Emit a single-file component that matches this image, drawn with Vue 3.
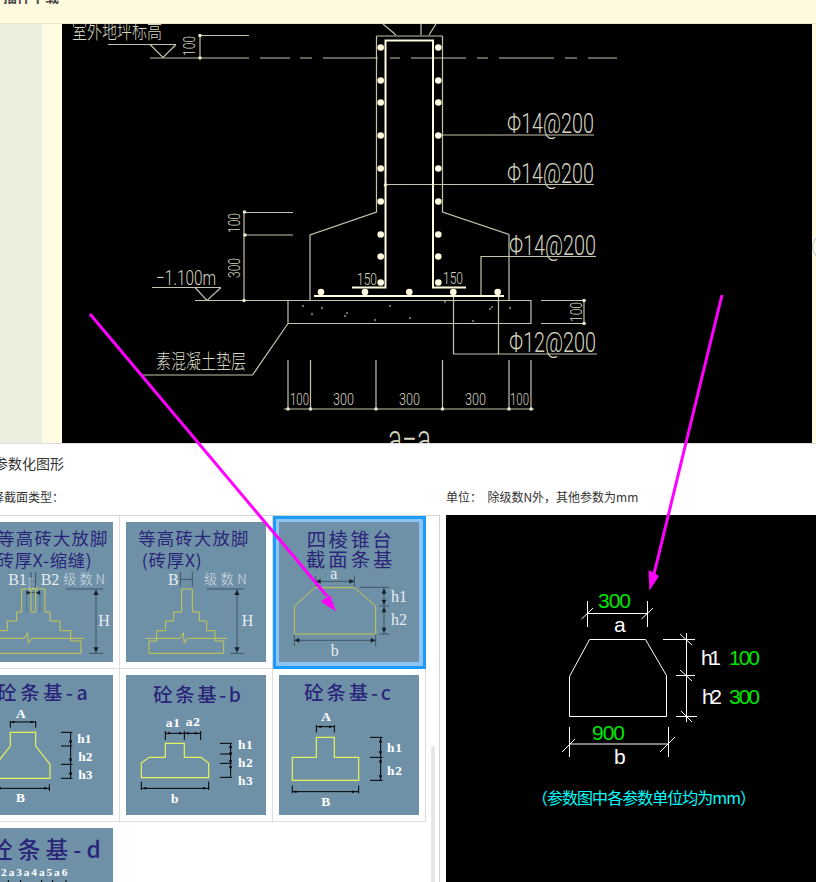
<template>
  <div class="page">
    <div class="topbar"><span class="topbar-text">插件下载</span></div>

    <div class="viewer">
      <div class="viewer-side"></div>
      <div class="viewer-gutter"></div>
      <svg class="cad" viewBox="62 24 750 419" width="750" height="419">
        <g class="thin">
          <path d="M383 24L396 35M421 24V35M436 24L429 35" />
          <path d="M108 44.5H176M150 44.5L163 57.5L176 44.5" />
          <path d="M150 58H249M260 58H290M300 58H312M323 58H378M390 58H400M411 58H466M477 58H488M499 58H554M565 58H577M588 58H617" />
          <path d="M200 35V58M200 35.5H249" />
          <path d="M376.5 36H442.5M376.5 36V212L310 235V300M442.5 36V212L509 234.5V300" />
          <path d="M244 212V300.5M245 212.5H293M245 235H293" />
          <path d="M385 184.5H594M438 135H594" />
          <path d="M481 296V256.5H596M453.5 292V354H597M498.5 292V354" />
          <path d="M152 287.5H221M195 287.5L207 300.5L221 287.5M195 300.5H288" />
          <path d="M288 300.5H531V323.5H288ZM288 323.5L252.5 375H143" />
          <path d="M541 300.5H586M541 323.5H586M584 300.5V323.5" />
          <path d="M284 409H534M288 360V409M310.5 360V409M376 360V409M442.5 360V409M509 360V409M531 360V409" />
        </g>
        <g class="thick">
          <path d="M385.5 184V40.5H433V287.5H466M385.5 184V287.5H352" />
          <path d="M314 296H504" />
        </g>
        <circle v-for="d in bars" :key="d[0] + '-' + d[1]" class="bar" :cx="d[0]" :cy="d[1]" r="3.3" />
        <g class="tick">
          <circle v-for="t in ticks" :key="t[0] + '_' + t[1]" :cx="t[0]" :cy="t[1]" r="1.8" />
        </g>
        <g class="speck">
          <circle v-for="s in specks" :key="s[0] + '~' + s[1]" :cx="s[0]" :cy="s[1]" r="1.2" />
        </g>
        <text class="cad-cn" x="72" y="39" textLength="90" lengthAdjust="spacingAndGlyphs">室外地坪标高</text>
        <text class="cad-cn" x="156" y="369" textLength="90" lengthAdjust="spacingAndGlyphs">素混凝土垫层</text>
        <text class="cad-num level" x="156" y="285" textLength="60" lengthAdjust="spacingAndGlyphs">−1.100m</text>
        <text class="cad-num" transform="rotate(-90 195 56)" x="195" y="56" textLength="20" lengthAdjust="spacingAndGlyphs">100</text>
        <text class="cad-num" transform="rotate(-90 240 233)" x="240" y="233" textLength="20" lengthAdjust="spacingAndGlyphs">100</text>
        <text class="cad-num" transform="rotate(-90 240 278)" x="240" y="278" textLength="20" lengthAdjust="spacingAndGlyphs">300</text>
        <text class="cad-num" transform="rotate(-90 582 322)" x="582" y="322" textLength="20" lengthAdjust="spacingAndGlyphs">100</text>
        <text class="cad-num" x="357" y="285" textLength="20" lengthAdjust="spacingAndGlyphs">150</text>
        <text class="cad-num" x="443" y="284" textLength="20" lengthAdjust="spacingAndGlyphs">150</text>
        <text class="cad-num" x="290" y="405" textLength="19" lengthAdjust="spacingAndGlyphs">100</text>
        <text class="cad-num" x="333" y="405" textLength="21" lengthAdjust="spacingAndGlyphs">300</text>
        <text class="cad-num" x="399" y="405" textLength="21" lengthAdjust="spacingAndGlyphs">300</text>
        <text class="cad-num" x="465" y="405" textLength="21" lengthAdjust="spacingAndGlyphs">300</text>
        <text class="cad-num" x="510" y="405" textLength="19" lengthAdjust="spacingAndGlyphs">100</text>
        <text class="cad-num rebar" x="507" y="133" textLength="87" lengthAdjust="spacingAndGlyphs">Φ14@200</text>
        <text class="cad-num rebar" x="507" y="183" textLength="87" lengthAdjust="spacingAndGlyphs">Φ14@200</text>
        <text class="cad-num rebar" x="509" y="255" textLength="87" lengthAdjust="spacingAndGlyphs">Φ14@200</text>
        <text class="cad-num rebar" x="509" y="352" textLength="87" lengthAdjust="spacingAndGlyphs">Φ12@200</text>
        <text class="cad-num section" x="388" y="453" textLength="43" lengthAdjust="spacingAndGlyphs">a−a</text>
      </svg>
      <div class="viewer-edge"><span class="edge-ring"></span></div>
    </div>

    <div class="panel">
      <div class="panel-title">参数化图形</div>
      <div class="panel-labels">
        <div class="label-type">选择截面类型：</div>
        <div class="label-unit">单位：&nbsp;&nbsp;除级数N外，其他参数为mm</div>
      </div>
      <div class="panel-body">
        <div class="list">
          <div class="cell">
            <svg class="thumb" viewBox="-81 246 420 420">
              <text class="t-title" x="-8" y="316" textLength="330">等高砖大放脚</text>
              <text class="t-title" x="-30" y="380" textLength="305">(砖厚X-缩缝)</text>
              <text class="t-label" x="25" y="434" textLength="55">B1</text>
              <text class="t-label" x="122" y="434" textLength="56">B2</text>
              <text class="t-soft" x="190" y="432" textLength="125">级数N</text>
              <text class="t-label" x="84" y="448">L</text>
              <text class="t-label" x="295" y="558">H</text>
              <path class="t-dim" d="M93 396V447M107 396V447M78 458H122M198 447H310M288 447V640M267 640H310" />
              <path class="t-dash" d="M80 447V516M120 447V516" />
              <path class="t-head" d="M288 450L280 465H296ZM288 637L280 622H296ZM93 458L80 452V464ZM107 458L120 452V464Z" />
              <path class="t-shape" d="M65 447H135V516H150V543H180V572H212V603H243V640H-43V603H-12V572H22V543H50V516H65ZM93 447V516H107V447M-53 595H73L83 578L85 610L95 595H253" />
            </svg>
          </div>
          <div class="cell">
            <svg class="thumb" viewBox="378 246 420 420">
              <text class="t-title" x="415" y="316" textLength="330">等高砖大放脚</text>
              <text class="t-title" x="425" y="380" textLength="180">(砖厚X)</text>
              <text class="t-label" x="504" y="434">B</text>
              <text class="t-soft" x="612" y="432" textLength="128">级数N</text>
              <text class="t-label" x="725" y="558">H</text>
              <path class="t-dim" d="M541 395V440M577 395V440M541 418H577M620 447H732M711 447V640M690 640H732" />
              <path class="t-head" d="M711 450L703 465H719ZM711 637L703 622H719Z" />
              <path class="t-shape" d="M545 447H577V516H598V543H620V572H645V603H671V640H447V603H470V572H497V543H521V516H545ZM437 595H540L550 578L553 610L563 595H681" />
            </svg>
          </div>
          <div class="cell selected">
            <svg class="thumb" viewBox="57 125 420 420">
              <text class="t-title wide" x="140" y="201" textLength="255">四棱锥台</text>
              <text class="t-title wide" x="138" y="261" textLength="259">截面条基</text>
              <text class="t-label" x="211" y="296">a</text>
              <text class="t-label" x="393" y="366">h1</text>
              <text class="t-label" x="393" y="434">h2</text>
              <text class="t-label" x="212" y="527">b</text>
              <path class="t-dim" d="M167 287V318M283 287V318M167 303H283M300 321H388M372 321V461M358 377H388M358 461H388M103 462V497M347 462V497M103 480H347" />
              <path class="t-head" d="M167 303L182 296V310ZM283 303L268 296V310ZM372 324L365 340H379ZM372 374L365 358H379ZM372 380L365 396H379ZM372 458L365 442H379ZM103 480L118 473V487ZM347 480L332 473V487Z" />
              <path class="t-shape" d="M165 322H283L347 377V461H103V377Z" />
            </svg>
          </div>

          <div class="cell">
            <svg class="thumb" viewBox="-81 30 420 420">
              <text class="t-title bold" x="-8" y="104" textLength="271">砼条基-a</text>
              <text class="t-bit" x="48" y="160">A</text>
              <text class="t-bit" x="232" y="234">h1</text>
              <text class="t-bit" x="235" y="288">h2</text>
              <text class="t-bit" x="235" y="342">h3</text>
              <text class="t-bit" x="48" y="411">B</text>
              <path class="t-black" d="M31 168V188M107 168V188M31 171H107M183 202H217M183 243H217M183 298H217M183 340H217M212 202V340M-50 370H148M148 358V378" />
              <path class="t-nodes" d="M37 168h6v6h-6zM92 168h6v6h-6zM208 225h7v8h-7zM208 280h7v8h-7zM208 322h7v8h-7zM132 367h7v6h-7zM-4 367h7v6h-7z" />
              <path class="t-bright" d="M31 202H107V243L150 298V340H-12V298L31 243Z" />
            </svg>
          </div>
          <div class="cell">
            <svg class="thumb" viewBox="378 30 420 420">
              <text class="t-title bold" x="460" y="111" textLength="263">砼条基-b</text>
              <text class="t-bit" x="497" y="187" textLength="43">a1</text>
              <text class="t-bit" x="557" y="183" textLength="43">a2</text>
              <text class="t-bit" x="714" y="252" textLength="44">h1</text>
              <text class="t-bit" x="714" y="306" textLength="44">h2</text>
              <text class="t-bit" x="714" y="360" textLength="44">h3</text>
              <text class="t-bit" x="513" y="414">b</text>
              <path class="t-black" d="M496 198V225M553 198V225M602 198V225M496 205H602M660 235H695M660 267H695M660 295H695M660 337H695M692 235V337M424 350V375M626 350V375M424 370H626" />
              <path class="t-nodes" d="M504 202h6v6h-6zM537 202h6v6h-6zM560 202h6v6h-6zM584 202h6v6h-6zM688 243h7v7h-7zM688 262h7v7h-7zM688 285h7v7h-7zM688 303h7v7h-7zM433 367h7v6h-7zM608 367h7v6h-7z" />
              <path class="t-bright" d="M496 235H553V277H603L626 294V338H424V294L447 277H496Z" />
            </svg>
          </div>
          <div class="cell">
            <svg class="thumb" viewBox="27 30 420 420">
              <text class="t-title bold" x="103" y="106" textLength="259">砼条基-c</text>
              <text class="t-bit" x="154" y="168">A</text>
              <text class="t-bit" x="351" y="261" textLength="45">h1</text>
              <text class="t-bit" x="351" y="330" textLength="45">h2</text>
              <text class="t-bit" x="154" y="423">B</text>
              <path class="t-black" d="M139 180V203M193 180V203M139 185H193M300 217H338M300 277H338M300 346H338M332 217V346M67 362V385M266 362V385M67 380H266" />
              <path class="t-nodes" d="M148 182h6v6h-6zM177 182h6v6h-6zM328 226h7v7h-7zM328 258h7v7h-7zM328 286h7v7h-7zM328 330h7v7h-7zM74 377h6v6h-6zM246 377h6v6h-6z" />
              <path class="t-bright" d="M139 217H193V277H266V346H67V277H139Z" />
            </svg>
          </div>

          <div class="cell plain">
            <svg class="thumb" viewBox="-81 489 420 420">
              <text class="t-title bold big" x="-30" y="578" textLength="332">砼条基-d</text>
              <text class="t-bit small" x="-65" y="632" textLength="267">a1a2a3a4a5a6</text>
              <path class="t-black" d="M25 645V665M62 645V665M125 645V665M158 645V665M198 645V665" />
            </svg>
          </div>
          <div class="scrollbar"></div>
        </div>

        <svg class="preview" viewBox="446 515 370 367">
          <g class="p-line">
            <path d="M589.5 639.5H645.5L666.5 675.5V716.5H569.5V676.5Z" />
            <path d="M587.5 601V627M647.5 601V627M587.5 613.5H647.5M581.5 619L593 608M641.5 619L653 608" />
            <path d="M686.5 633V722M663 639.5H695M676 675.5H695M676 716.5H697M680 634L692 645M680 670L692 681M681 711L692 722" />
            <path d="M569.5 727V757M668.5 727V757M569.5 744H668.5M562 752L575 739M660 752L675 737" />
          </g>
          <text class="p-value" x="598" y="608" textLength="33">300</text>
          <text class="p-name" x="614" y="632">a</text>
          <text class="p-name" x="701" y="665" textLength="20">h1</text>
          <text class="p-value" x="729" y="665" textLength="31">100</text>
          <text class="p-name" x="702" y="704" textLength="20">h2</text>
          <text class="p-value" x="729" y="704" textLength="31">300</text>
          <text class="p-value" x="592" y="740" textLength="33">900</text>
          <text class="p-name" x="614" y="764">b</text>
          <text class="p-note" x="532" y="804" textLength="224">（参数图中各参数单位均为mm）</text>
        </svg>
      </div>
    </div>

    <svg class="arrows" viewBox="0 0 816 882" width="816" height="882">
      <path class="arrow-line" d="M90 314L327 596M722 295L654 574" />
      <path class="arrow-head" d="M336 611.5L320.5 601.5L330 595ZM649.5 590.5L648.5 570L659 576Z" />
    </svg>
  </div>
</template>

<script setup>
const barRows = [47.5, 80.5, 102.5, 135.5, 168.5, 201.5, 234.5, 256.5, 282.5];

const bars = [
  ...barRows.flatMap((y) => [[380.7, y], [438.3, y]]),
  [321, 292], [365, 292], [409.3, 292], [453.3, 292], [497.7, 292],
];

const ticks = [
  [200, 35.5], [200, 58], [244.5, 212], [245, 235], [244, 300.5], [385.5, 185],
  [288, 409], [310.5, 409], [376, 409], [442.5, 409], [509, 409], [531, 409],
  [584, 300.5], [584, 323.5],
];

const specks = [
  [312, 314], [345, 316], [347, 313], [375, 320], [410, 318], [445, 302], [492, 307],
  [490, 309], [510, 308], [473, 321], [303, 306], [322, 308], [390, 306],
];
</script>

<style>
html,
body {
  margin: 0;
  background: #fff;
}
</style>

<style scoped>
.page {
  position: relative;
  display: flex;
  flex-direction: column;
  width: 816px;
  height: 882px;
  overflow: hidden;
  font-family: "Noto Sans CJK SC", "Liberation Sans", sans-serif;
  color: #333;
}

.topbar {
  flex: none;
  height: 24px;
  box-sizing: border-box;
  overflow: hidden;
  background: #fff9de;
  border-bottom: 1px solid #ece8d0;
}

.topbar-text {
  display: block;
  margin: -12px 0 0 3px;
  font-size: 14px;
  line-height: 16px;
  font-weight: 700;
  color: #444;
}

.viewer {
  flex: none;
  display: flex;
  height: 419px;
}

.viewer-side {
  width: 42px;
  background: #e9eedd;
}

.viewer-gutter {
  width: 20px;
  background: #fffbe2;
}

.cad {
  display: block;
  flex: none;
  background: #000;
}

.viewer-edge {
  flex: 1;
  padding-top: 208px;
  overflow: hidden;
  background: #fffbe2;
}

.edge-ring {
  display: block;
  width: 36px;
  height: 30px;
  box-sizing: border-box;
  border: 1px solid #b8d4e2;
  border-radius: 50%;
}

.thin {
  fill: none;
  stroke: #c4c4ac;
  stroke-width: 1.2;
}

.thick {
  fill: none;
  stroke: #fffbdf;
  stroke-width: 2;
}

.bar {
  fill: #fffbdf;
}

.tick circle {
  fill: #e8e8d0;
}

.speck circle {
  fill: #6e6e60;
}

.cad-cn {
  fill: #d6d6c0;
  font-size: 20px;
  font-family: "Noto Sans CJK SC", sans-serif;
  font-weight: 300;
}

.cad-num {
  fill: #d6d6c0;
  font-size: 17px;
  font-family: Roboto, "Liberation Sans", sans-serif;
  font-weight: 300;
}

.cad-num.level {
  font-size: 21px;
}

.cad-num.rebar {
  font-size: 28px;
}

.cad-num.section {
  font-size: 40px;
}

.panel {
  flex: 1;
  min-height: 0;
  box-sizing: border-box;
  background: #fff;
  border-top: 1px solid #ddd;
  padding-top: 9px;
}

.panel-title {
  font-size: 14px;
  line-height: 20px;
  margin-left: -6px;
}

.panel-labels {
  display: flex;
  margin: 16px 0 10px;
  font-size: 12px;
  line-height: 16px;
}

.label-type {
  width: 446px;
  margin-left: -20px;
  padding-left: 20px;
  box-sizing: border-box;
  text-indent: -20px;
}

.label-unit {
  margin-left: 20px;
}

.panel-body {
  display: flex;
  gap: 6px;
  height: 367px;
  margin-left: -33px;
}

.list {
  position: relative;
  flex: none;
  display: grid;
  grid-template-columns: repeat(3, 153px);
  grid-auto-rows: 153px;
  align-content: start;
  width: 473px;
  box-sizing: border-box;
  overflow: hidden;
  border-top: 1px solid #d4d4d4;
  border-right: 1px solid #d4d4d4;
}

.cell {
  box-sizing: border-box;
  padding: 6px;
  border-right: 1px solid #ddd;
  border-bottom: 1px solid #ddd;
}

.cell.plain {
  border: 0;
}

.cell.selected {
  padding: 3px;
  border: 3px solid #1a9cff;
  background: #8cc4f5;
}

.thumb {
  display: block;
  width: 140px;
  height: 140px;
  background: #6f91a8;
}

.t-title {
  fill: #2a2578;
  font-size: 52px;
  font-family: "Noto Sans CJK SC", sans-serif;
  font-weight: 400;
}

.t-title.wide {
  font-size: 58px;
}

.t-title.bold {
  font-size: 58px;
  font-weight: 500;
}

.t-title.big {
  font-size: 68px;
}

.t-label {
  fill: #e6ecf0;
  font-size: 48px;
  font-family: "Liberation Serif", serif;
}

.t-soft {
  fill: #d4dde4;
  font-size: 40px;
  font-family: "Noto Sans CJK SC", sans-serif;
  font-weight: 300;
}

.t-bit {
  fill: #fff;
  font-size: 40px;
  font-weight: 700;
  font-family: "Liberation Serif", serif;
}

.t-bit.small {
  font-size: 34px;
}

.t-dim {
  fill: none;
  stroke: #3e5565;
  stroke-width: 3;
}

.t-dash {
  fill: none;
  stroke: #3e5565;
  stroke-width: 3;
  stroke-dasharray: 4 4;
}

.t-head {
  fill: #15202a;
}

.t-shape {
  fill: none;
  stroke: #c8c850;
  stroke-width: 3;
}

.t-black {
  fill: none;
  stroke: #000;
  stroke-width: 3;
}

.t-nodes {
  fill: #000;
}

.t-bright {
  fill: none;
  stroke: #e6f25a;
  stroke-width: 3.6;
}

.scrollbar {
  position: absolute;
  top: 230px;
  right: 4px;
  bottom: 0;
  width: 4px;
  background: #e8e8e8;
}

.preview {
  display: block;
  flex: 1;
  height: 367px;
  background: #000;
}

.p-line {
  fill: none;
  stroke: #fff;
  stroke-width: 1;
}

.p-value {
  fill: #00e600;
  font-size: 21px;
  font-family: "Liberation Sans", sans-serif;
}

.p-name {
  fill: #fff;
  font-size: 21px;
  font-family: "Liberation Sans", sans-serif;
}

.p-note {
  fill: #00ffff;
  font-size: 16px;
  font-family: "Noto Sans CJK SC", sans-serif;
  font-weight: 400;
}

.arrows {
  position: absolute;
  left: 0;
  top: 0;
  pointer-events: none;
}

.arrow-line {
  fill: none;
  stroke: #ff00ff;
  stroke-width: 3;
}

.arrow-head {
  fill: #ff00ff;
}
</style>
